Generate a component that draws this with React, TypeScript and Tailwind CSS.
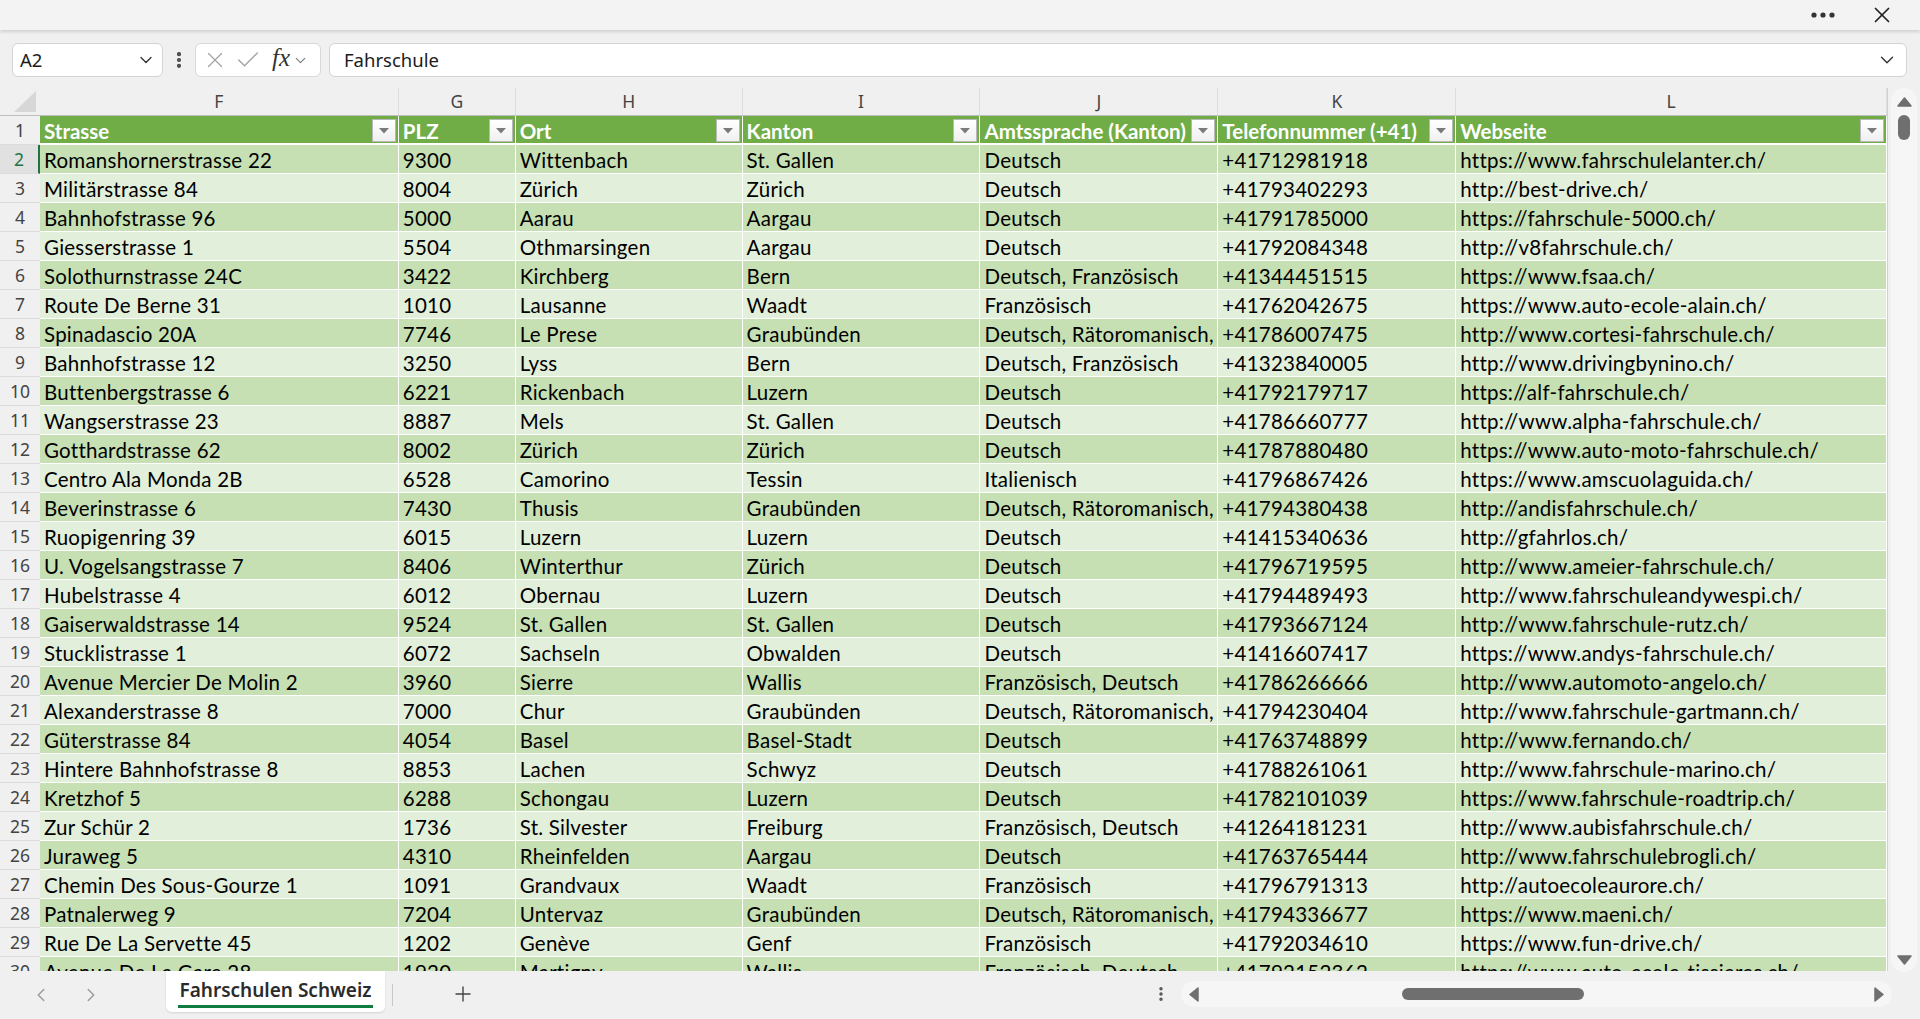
import React from 'react'
import { ChevronDown, ChevronLeft, ChevronRight, X, Check, Plus, MoreVertical } from 'lucide-react'

const cols = [
  { letter: 'F', title: 'Strasse', w: 'w-[359px]' },
  { letter: 'G', title: 'PLZ', w: 'w-[117px]' },
  { letter: 'H', title: 'Ort', w: 'w-[227px]' },
  { letter: 'I', title: 'Kanton', w: 'w-[238px]' },
  { letter: 'J', title: 'Amtssprache (Kanton)', w: 'w-[238px]' },
  { letter: 'K', title: 'Telefonnummer (+41)', w: 'w-[238px]' },
  { letter: 'L', title: 'Webseite', w: 'w-[431px]' },
]

const rows: string[][] = [
  ['Romanshornerstrasse 22', '9300', 'Wittenbach', 'St. Gallen', 'Deutsch', '+41712981918', 'https://www.fahrschulelanter.ch/'],
  ['Militärstrasse 84', '8004', 'Zürich', 'Zürich', 'Deutsch', '+41793402293', 'http://best-drive.ch/'],
  ['Bahnhofstrasse 96', '5000', 'Aarau', 'Aargau', 'Deutsch', '+41791785000', 'https://fahrschule-5000.ch/'],
  ['Giesserstrasse 1', '5504', 'Othmarsingen', 'Aargau', 'Deutsch', '+41792084348', 'http://v8fahrschule.ch/'],
  ['Solothurnstrasse 24C', '3422', 'Kirchberg', 'Bern', 'Deutsch, Französisch', '+41344451515', 'https://www.fsaa.ch/'],
  ['Route De Berne 31', '1010', 'Lausanne', 'Waadt', 'Französisch', '+41762042675', 'https://www.auto-ecole-alain.ch/'],
  ['Spinadascio 20A', '7746', 'Le Prese', 'Graubünden', 'Deutsch, Rätoromanisch,', '+41786007475', 'http://www.cortesi-fahrschule.ch/'],
  ['Bahnhofstrasse 12', '3250', 'Lyss', 'Bern', 'Deutsch, Französisch', '+41323840005', 'http://www.drivingbynino.ch/'],
  ['Buttenbergstrasse 6', '6221', 'Rickenbach', 'Luzern', 'Deutsch', '+41792179717', 'https://alf-fahrschule.ch/'],
  ['Wangserstrasse 23', '8887', 'Mels', 'St. Gallen', 'Deutsch', '+41786660777', 'http://www.alpha-fahrschule.ch/'],
  ['Gotthardstrasse 62', '8002', 'Zürich', 'Zürich', 'Deutsch', '+41787880480', 'https://www.auto-moto-fahrschule.ch/'],
  ['Centro Ala Monda 2B', '6528', 'Camorino', 'Tessin', 'Italienisch', '+41796867426', 'https://www.amscuolaguida.ch/'],
  ['Beverinstrasse 6', '7430', 'Thusis', 'Graubünden', 'Deutsch, Rätoromanisch,', '+41794380438', 'http://andisfahrschule.ch/'],
  ['Ruopigenring 39', '6015', 'Luzern', 'Luzern', 'Deutsch', '+41415340636', 'http://gfahrlos.ch/'],
  ['U. Vogelsangstrasse 7', '8406', 'Winterthur', 'Zürich', 'Deutsch', '+41796719595', 'http://www.ameier-fahrschule.ch/'],
  ['Hubelstrasse 4', '6012', 'Obernau', 'Luzern', 'Deutsch', '+41794489493', 'http://www.fahrschuleandywespi.ch/'],
  ['Gaiserwaldstrasse 14', '9524', 'St. Gallen', 'St. Gallen', 'Deutsch', '+41793667124', 'http://www.fahrschule-rutz.ch/'],
  ['Stucklistrasse 1', '6072', 'Sachseln', 'Obwalden', 'Deutsch', '+41416607417', 'https://www.andys-fahrschule.ch/'],
  ['Avenue Mercier De Molin 2', '3960', 'Sierre', 'Wallis', 'Französisch, Deutsch', '+41786266666', 'http://www.automoto-angelo.ch/'],
  ['Alexanderstrasse 8', '7000', 'Chur', 'Graubünden', 'Deutsch, Rätoromanisch,', '+41794230404', 'http://www.fahrschule-gartmann.ch/'],
  ['Güterstrasse 84', '4054', 'Basel', 'Basel-Stadt', 'Deutsch', '+41763748899', 'http://www.fernando.ch/'],
  ['Hintere Bahnhofstrasse 8', '8853', 'Lachen', 'Schwyz', 'Deutsch', '+41788261061', 'http://www.fahrschule-marino.ch/'],
  ['Kretzhof 5', '6288', 'Schongau', 'Luzern', 'Deutsch', '+41782101039', 'https://www.fahrschule-roadtrip.ch/'],
  ['Zur Schür 2', '1736', 'St. Silvester', 'Freiburg', 'Französisch, Deutsch', '+41264181231', 'http://www.aubisfahrschule.ch/'],
  ['Juraweg 5', '4310', 'Rheinfelden', 'Aargau', 'Deutsch', '+41763765444', 'http://www.fahrschulebrogli.ch/'],
  ['Chemin Des Sous-Gourze 1', '1091', 'Grandvaux', 'Waadt', 'Französisch', '+41796791313', 'http://autoecoleaurore.ch/'],
  ['Patnalerweg 9', '7204', 'Untervaz', 'Graubünden', 'Deutsch, Rätoromanisch,', '+41794336677', 'https://www.maeni.ch/'],
  ['Rue De La Servette 45', '1202', 'Genève', 'Genf', 'Französisch', '+41792034610', 'https://www.fun-drive.ch/'],
  ['Avenue De La Gare 28', '1920', 'Martigny', 'Wallis', 'Französisch, Deutsch', '+41792152362', 'https://www.auto-ecole-tissieres.ch/'],
]

const cellFont = "font-['Lato',sans-serif] text-[20.5px]"
const uiFont = "font-['Noto_Sans',sans-serif]"

const FilterButton = () => (
  <div className="absolute right-[2px] top-[3px] w-[24px] h-[23px] bg-gradient-to-b from-white to-[#f0f0f0] border border-[#b8b8b8] flex items-center justify-center">
    <svg width="10" height="6" viewBox="0 0 10 6"><path d="M0 0h10L5 5.5z" fill="#7a7a7a" /></svg>
  </div>
)

const Tri = ({ dir }: { dir: 'up' | 'down' | 'left' | 'right' }) => {
  const d = {
    up: 'M1 11L7.5 3L14 11z',
    down: 'M1 3L7.5 11L14 3z',
    left: 'M11 1L3 7.5L11 14z',
    right: 'M3 1L11 7.5L3 14z',
  }[dir]
  return <svg width="15" height="15" viewBox="0 0 15 15"><path d={d} fill="#6f6f6f" strokeLinejoin="round" stroke="#6f6f6f" strokeWidth="1.5" /></svg>
}

export default function App() {
  return (
    <div className={`w-[1920px] h-[1019px] bg-[#f0f0f0] flex flex-col overflow-hidden ${uiFont}`}>
      {/* title strip */}
      <div className="h-[30px] shrink-0 bg-[#f3f3f3] shadow-[0_2px_3px_rgba(0,0,0,0.13)] z-10 flex items-center justify-end pr-[25px]">
        <svg width="24" height="6" viewBox="0 0 24 6" className="mr-[34px]">
          <circle cx="3" cy="3" r="2.6" fill="#333" />
          <circle cx="12" cy="3" r="2.6" fill="#333" />
          <circle cx="21" cy="3" r="2.6" fill="#333" />
        </svg>
        <X size={26} strokeWidth={1.6} color="#222" />
      </div>

      {/* formula bar */}
      <div className="h-[58px] shrink-0 flex items-start pt-[13px] pl-[12px] pr-[13px]">
        <div className="w-[151px] h-[34px] bg-white border border-[#d4d4d4] rounded-[6px] flex items-center justify-between pl-[7px] pr-[6px]">
          <span className="text-[18.5px] text-[#1b1b1b]">A2</span>
          <ChevronDown size={20} strokeWidth={1.6} color="#333" />
        </div>
        <div className="w-[32px] h-[34px] flex items-center justify-center">
          <MoreVertical size={20} strokeWidth={3} color="#444" />
        </div>
        <div className="w-[126px] h-[34px] bg-white border border-[#d8d8d8] rounded-[6px] flex items-center pl-[6px] gap-[6px]">
          <X size={26} strokeWidth={1.2} color="#a3a3a3" />
          <Check size={28} strokeWidth={1.2} color="#a3a3a3" />
          <span className="font-['Liberation_Serif',serif] italic text-[25px] text-[#333] ml-[4px] -mt-[4px]">fx</span>
          <ChevronDown size={17} strokeWidth={1.5} color="#777" className="-ml-[4px]" />
        </div>
        <div className="ml-[8px] flex-1 h-[34px] bg-white border border-[#d4d4d4] rounded-[6px] flex items-center justify-between pl-[14px] pr-[8px]">
          <span className="text-[18.5px] text-[#1b1b1b]">Fahrschule</span>
          <ChevronDown size={22} strokeWidth={1.5} color="#333" />
        </div>
      </div>

      {/* sheet area */}
      <div className="h-[883px] shrink-0 flex">
        <div className="w-[1888px] h-[883px] overflow-hidden border-r border-[#d0d0d0]">
          {/* column letters */}
          <div className="flex h-[28px] border-b border-[#bdbdbd]">
            <div className="w-[40px] h-full relative flex items-end justify-end pr-[4px] pb-[3px]">
              <svg width="22" height="21" viewBox="0 0 22 21"><path d="M22 0V21H0z" fill="#d7d7d7" /></svg>
            </div>
            {cols.map((c) => (
              <div key={c.letter} className={`${c.w} h-full flex items-center justify-center border-r border-[#dedede] text-[17.5px] text-[#444]`}>
                {c.letter}
              </div>
            ))}
          </div>

          {/* header row */}
          <div className="flex h-[29px]">
            <div className="w-[40px] h-full flex items-center justify-center text-[17.5px] text-[#444] border-b border-[#dcdcdc]">1</div>
            {cols.map((c) => (
              <div key={c.title} className={`${c.w} h-full relative bg-[#70ad47] border-r border-b-2 border-white pl-[4px] pt-[3px] flex items-center ${cellFont} font-bold text-white whitespace-nowrap overflow-hidden`}>
                {c.title}
                <FilterButton />
              </div>
            ))}
          </div>

          {rows.map((r, i) => {
            const rowNum = i + 2
            const active = rowNum === 2
            const bg = i % 2 === 0 ? 'bg-[#c6e0b4]' : 'bg-[#e2efda]'
            return (
              <div key={rowNum} className="flex h-[29px]">
                <div
                  className={`w-[40px] h-full flex items-center justify-center text-[17.5px] border-b border-[#dcdcdc] ${
                    active ? 'bg-[#e1e1e1] text-[#217346] border-r-[2px] border-r-[#217346]' : 'text-[#444]'
                  }`}
                >
                  {rowNum}
                </div>
                {cols.map((c, j) => (
                  <div
                    key={c.letter}
                    className={`${c.w} h-full ${bg} border-r border-b border-white pl-[4px] pt-[2px] flex items-center ${cellFont} tracking-[0.25px] text-black whitespace-nowrap overflow-hidden`}
                  >
                    {r[j]}
                  </div>
                ))}
              </div>
            )
          })}
        </div>

        {/* vertical scrollbar */}
        <div className="w-[32px] h-full flex justify-center">
          <div className="w-[26px] h-[884px] bg-[#f6f6f6] rounded-full flex flex-col items-center pt-[7px] pb-[4px]">
            <Tri dir="up" />
            <div className="w-[12px] h-[25px] bg-[#6f6f6f] rounded-full mt-[5px]" />
            <div className="flex-1" />
            <Tri dir="down" />
          </div>
        </div>
      </div>

      {/* sheet tabs */}
      <div className="flex-1 flex items-start">
        <div className="w-[166px] h-[48px] flex items-center pl-[30px] gap-[28px]">
          <ChevronLeft size={22} strokeWidth={1.6} color="#9c9c9c" />
          <ChevronRight size={22} strokeWidth={1.6} color="#9c9c9c" />
        </div>
        <div className="w-[219px] h-[41px] bg-white rounded-b-[6px] shadow-[0_1px_2px_rgba(0,0,0,0.12)] flex flex-col items-center justify-end pb-[4px]">
          <span className="text-[19px] font-semibold text-[#2b2b2b] leading-[26px]">Fahrschulen Schweiz</span>
          <div className="w-[195px] h-[3px] bg-[#107c41] mt-[2px]" />
        </div>
        <div className="w-px h-[22px] bg-[#c8c8c8] ml-[7px] mt-[13px]" />
        <div className="w-[140px] h-[46px] flex items-center justify-center">
          <Plus size={24} strokeWidth={1.4} color="#444" />
        </div>
        <div className="flex-1" />
        <div className="w-[40px] h-[46px] flex items-center justify-center">
          <MoreVertical size={18} strokeWidth={2.6} color="#555" />
        </div>
        <div className="w-[711px] h-[26px] mt-[10px] bg-[#f6f6f6] rounded-full flex items-center pl-[6px] pr-[5px] mr-[28px]">
          <Tri dir="left" />
          <div className="w-[200px]" />
          <div className="w-[182px] h-[12px] bg-[#6f6f6f] rounded-full" />
          <div className="flex-1" />
          <Tri dir="right" />
        </div>
      </div>
    </div>
  )
}
